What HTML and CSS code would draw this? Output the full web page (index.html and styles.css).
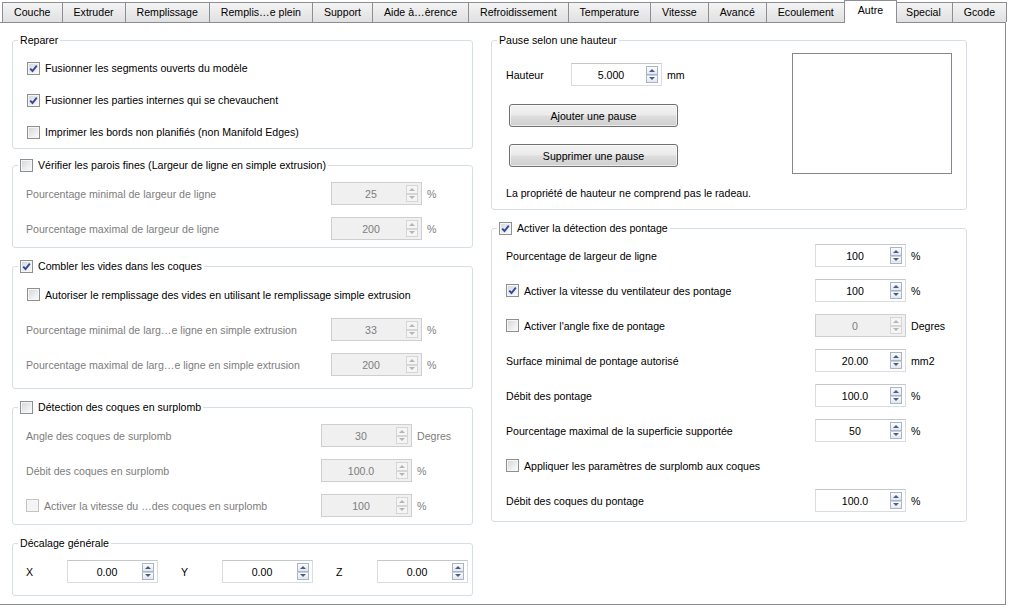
FILE: index.html
```html
<!DOCTYPE html>
<html lang="fr">
<head>
    <meta charset="UTF-8">
    <title>Autre - Réglages</title>
    <link rel="stylesheet" href="styles.css">
</head>
<body>
    <div class="tabs">
        <div class="tab">Couche</div>
        <div class="tab">Extruder</div>
        <div class="tab">Remplissage</div>
        <div class="tab">Remplis…e plein</div>
        <div class="tab">Support</div>
        <div class="tab">Aide à…èrence</div>
        <div class="tab">Refroidissement</div>
        <div class="tab">Temperature</div>
        <div class="tab">Vitesse</div>
        <div class="tab">Avancé</div>
        <div class="tab">Ecoulement</div>
        <div class="tab active">Autre</div>
        <div class="tab">Special</div>
        <div class="tab">Gcode</div>
    </div>

    <div class="pane">
        <!-- colonne gauche -->
        <div class="col col-left">
            <fieldset class="group group-repair">
                <legend>Reparer</legend>
                <div class="row row-check">
                    <span class="check checked"><svg viewBox="0 0 9 9"><path d="M1.2 4.6 L3.5 7 L7.8 1.6"/></svg></span>
                    <span>Fusionner les segments ouverts du modèle</span>
                </div>
                <div class="row row-check">
                    <span class="check checked"><svg viewBox="0 0 9 9"><path d="M1.2 4.6 L3.5 7 L7.8 1.6"/></svg></span>
                    <span>Fusionner les parties internes qui se chevauchent</span>
                </div>
                <div class="row row-check">
                    <span class="check"></span>
                    <span>Imprimer les bords non planifiés (non Manifold Edges)</span>
                </div>
            </fieldset>

            <fieldset class="group">
                <legend><span class="check"></span>Vérifier les parois fines (Largeur de ligne en simple extrusion)</legend>
                <div class="row">
                    <span class="label disabled">Pourcentage minimal de largeur de ligne</span>
                    <div class="spin disabled"><span class="spin-value">25</span><span class="spin-btns"><span class="spin-up"></span><span class="spin-down"></span></span></div>
                    <span class="unit disabled">%</span>
                </div>
                <div class="row">
                    <span class="label disabled">Pourcentage maximal de largeur de ligne</span>
                    <div class="spin disabled"><span class="spin-value">200</span><span class="spin-btns"><span class="spin-up"></span><span class="spin-down"></span></span></div>
                    <span class="unit disabled">%</span>
                </div>
            </fieldset>

            <fieldset class="group group-gaps">
                <legend><span class="check checked"><svg viewBox="0 0 9 9"><path d="M1.2 4.6 L3.5 7 L7.8 1.6"/></svg></span>Combler les vides dans les coques</legend>
                <div class="row row-check">
                    <span class="check"></span>
                    <span>Autoriser le remplissage des vides en utilisant le remplissage simple extrusion</span>
                </div>
                <div class="row">
                    <span class="label disabled">Pourcentage minimal de larg…e ligne en simple extrusion</span>
                    <div class="spin disabled"><span class="spin-value">33</span><span class="spin-btns"><span class="spin-up"></span><span class="spin-down"></span></span></div>
                    <span class="unit disabled">%</span>
                </div>
                <div class="row">
                    <span class="label disabled">Pourcentage maximal de larg…e ligne en simple extrusion</span>
                    <div class="spin disabled"><span class="spin-value">200</span><span class="spin-btns"><span class="spin-up"></span><span class="spin-down"></span></span></div>
                    <span class="unit disabled">%</span>
                </div>
            </fieldset>

            <fieldset class="group group-wide-unit">
                <legend><span class="check"></span>Détection des coques en surplomb</legend>
                <div class="row">
                    <span class="label disabled">Angle des coques de surplomb</span>
                    <div class="spin disabled"><span class="spin-value">30</span><span class="spin-btns"><span class="spin-up"></span><span class="spin-down"></span></span></div>
                    <span class="unit disabled">Degres</span>
                </div>
                <div class="row">
                    <span class="label disabled">Débit des coques en surplomb</span>
                    <div class="spin disabled"><span class="spin-value">100.0</span><span class="spin-btns"><span class="spin-up"></span><span class="spin-down"></span></span></div>
                    <span class="unit disabled">%</span>
                </div>
                <div class="row">
                    <span class="label label-check disabled"><span class="check disabled"></span>Activer la vitesse du …des coques en surplomb</span>
                    <div class="spin disabled"><span class="spin-value">100</span><span class="spin-btns"><span class="spin-up"></span><span class="spin-down"></span></span></div>
                    <span class="unit disabled">%</span>
                </div>
            </fieldset>

            <fieldset class="group group-offset">
                <legend>Décalage générale</legend>
                <div class="row offset-row">
                    <div class="offset-item">
                        <span class="axis">X</span>
                        <div class="spin"><span class="spin-value">0.00</span><span class="spin-btns"><span class="spin-up"></span><span class="spin-down"></span></span></div>
                    </div>
                    <div class="offset-item">
                        <span class="axis">Y</span>
                        <div class="spin"><span class="spin-value">0.00</span><span class="spin-btns"><span class="spin-up"></span><span class="spin-down"></span></span></div>
                    </div>
                    <div class="offset-item">
                        <span class="axis">Z</span>
                        <div class="spin"><span class="spin-value">0.00</span><span class="spin-btns"><span class="spin-up"></span><span class="spin-down"></span></span></div>
                    </div>
                </div>
            </fieldset>
        </div>

        <!-- colonne droite -->
        <div class="col col-right">
            <fieldset class="group group-pause">
                <legend>Pause selon une hauteur</legend>
                <div class="pause-body">
                    <div class="pause-left">
                        <div class="row row-height">
                            <span class="height-label">Hauteur</span>
                            <div class="spin"><span class="spin-value">5.000</span><span class="spin-btns"><span class="spin-up"></span><span class="spin-down"></span></span></div>
                            <span class="unit-mm">mm</span>
                        </div>
                        <button class="btn btn-add">Ajouter une pause</button>
                        <button class="btn btn-remove">Supprimer une pause</button>
                        <p class="note">La propriété de hauteur ne comprend pas le radeau.</p>
                    </div>
                    <div class="pause-list"></div>
                </div>
            </fieldset>

            <fieldset class="group group-bridge group-wide-unit">
                <legend><span class="check checked"><svg viewBox="0 0 9 9"><path d="M1.2 4.6 L3.5 7 L7.8 1.6"/></svg></span>Activer la détection des pontage</legend>
                <div class="row">
                    <span class="label">Pourcentage de largeur de ligne</span>
                    <div class="spin"><span class="spin-value">100</span><span class="spin-btns"><span class="spin-up"></span><span class="spin-down"></span></span></div>
                    <span class="unit">%</span>
                </div>
                <div class="row">
                    <span class="label label-check"><span class="check checked"><svg viewBox="0 0 9 9"><path d="M1.2 4.6 L3.5 7 L7.8 1.6"/></svg></span>Activer la vitesse du ventilateur des pontage</span>
                    <div class="spin"><span class="spin-value">100</span><span class="spin-btns"><span class="spin-up"></span><span class="spin-down"></span></span></div>
                    <span class="unit">%</span>
                </div>
                <div class="row">
                    <span class="label label-check"><span class="check"></span>Activer l'angle fixe de pontage</span>
                    <div class="spin disabled"><span class="spin-value">0</span><span class="spin-btns"><span class="spin-up"></span><span class="spin-down"></span></span></div>
                    <span class="unit">Degres</span>
                </div>
                <div class="row">
                    <span class="label">Surface minimal de pontage autorisé</span>
                    <div class="spin"><span class="spin-value">20.00</span><span class="spin-btns"><span class="spin-up"></span><span class="spin-down"></span></span></div>
                    <span class="unit">mm2</span>
                </div>
                <div class="row">
                    <span class="label">Débit des pontage</span>
                    <div class="spin"><span class="spin-value">100.0</span><span class="spin-btns"><span class="spin-up"></span><span class="spin-down"></span></span></div>
                    <span class="unit">%</span>
                </div>
                <div class="row">
                    <span class="label">Pourcentage maximal de la superficie supportée</span>
                    <div class="spin"><span class="spin-value">50</span><span class="spin-btns"><span class="spin-up"></span><span class="spin-down"></span></span></div>
                    <span class="unit">%</span>
                </div>
                <div class="row">
                    <span class="label label-check"><span class="check"></span>Appliquer les paramètres de surplomb aux coques</span>
                </div>
                <div class="row">
                    <span class="label">Débit des coques du pontage</span>
                    <div class="spin"><span class="spin-value">100.0</span><span class="spin-btns"><span class="spin-up"></span><span class="spin-down"></span></span></div>
                    <span class="unit">%</span>
                </div>
            </fieldset>
        </div>
    </div>
</body>
</html>
```

FILE: styles.css
```css
* {
    margin: 0;
    padding: 0;
    box-sizing: border-box;
}

body {
    font-family: 'Liberation Sans', Arial, sans-serif;
    font-size: 10.6px;
    color: #000;
    background: #fff;
    overflow: hidden;
}

/* onglets */
.tabs {
    display: flex;
    align-items: flex-end;
    height: 22px;
    padding-left: 2px;
}

.tab {
    height: 20px;
    padding: 0 11px;
    line-height: 19px;
    border: 1px solid #8c8e94;
    border-bottom: none;
    border-left: none;
    background: linear-gradient(#f4f4f4, #e8e8e8 60%, #e0e0e0);
    white-space: nowrap;
}

.tab:first-child {
    border-left: 1px solid #8c8e94;
}

.tab.active {
    position: relative;
    z-index: 1;
    height: 23px;
    margin: 0 -2px -1px -2px;
    padding: 0 13px;
    line-height: 19px;
    border-left: 1px solid #8c8e94;
    background: #fff;
}

/* panneau */
.pane {
    display: flex;
    gap: 18px;
    width: 1006px;
    height: 583px;
    padding: 10px 0 0 12px;
    border: 1px solid #898c95;
    border-left: none;
}

.col-left {
    width: 461px;
}

.col-right {
    width: 476px;
}

.group {
    border: 1px solid #d5dfe5;
    border-radius: 3px;
    padding: 4px 0 1px;
    margin-bottom: 11px;
    min-width: 0;
}

.group legend {
    display: flex;
    align-items: center;
    gap: 5px;
    margin-left: 5px;
    padding: 0 2px;
    line-height: 14px;
    height: 14px;
}

.group-repair {
    padding: 5px 0 0;
    margin-bottom: 9px;
}

.group-gaps {
    padding-bottom: 6px;
}

.group-offset {
    padding-bottom: 6px;
}

.row {
    display: flex;
    align-items: center;
    height: 35px;
    padding-left: 13px;
}

.group-repair .row {
    height: 32px;
    padding-left: 14px;
}

.row-check {
    gap: 5px;
    padding-left: 14px;
}

.label {
    flex: 1;
    white-space: nowrap;
}

.label-check {
    display: flex;
    align-items: center;
    gap: 5px;
}

.disabled {
    color: #7d7d7d;
}

.unit {
    width: 45px;
    margin-left: 5px;
}

.group-wide-unit .unit {
    width: 55px;
}

/* case a cocher */
.check {
    display: inline-flex;
    align-items: center;
    justify-content: center;
    flex: none;
    width: 13px;
    height: 13px;
    border: 1px solid #8e8f8f;
    background: linear-gradient(135deg, #d2d4d8 0%, #eceef0 60%, #fbfbfb 100%);
    box-shadow: inset 0 0 0 1px #f6f6f6;
}

.check svg {
    width: 9px;
    height: 9px;
}

.check svg path {
    fill: none;
    stroke: #33489a;
    stroke-width: 1.9;
}

.check.disabled {
    border-color: #c3c3c3;
    background: #f4f4f4;
}

/* spinbox */
.spin {
    display: flex;
    align-items: stretch;
    flex: none;
    width: 91px;
    height: 23px;
    border: 1px solid #d9dce2;
    border-top-color: #c4c8ce;
    background: #fff;
}

.spin-value {
    flex: 1;
    align-self: center;
    text-align: center;
    padding-left: 4px;
}

.spin-btns {
    display: flex;
    flex-direction: column;
    width: 12px;
    margin: 2px 3px 2px 0;
}

.spin-up,
.spin-down {
    flex: 1;
    display: flex;
    align-items: center;
    justify-content: center;
    border: 1px solid #aab4c2;
    background: linear-gradient(#fcfdfe, #e2e7ee);
}

.spin-down {
    border-top-color: #c9d0d9;
}

.spin-up::after,
.spin-down::after {
    content: "";
    border-left: 3px solid transparent;
    border-right: 3px solid transparent;
}

.spin-up::after {
    border-bottom: 3px solid #4a5d86;
}

.spin-down::after {
    border-top: 3px solid #4a5d86;
}

.spin.disabled {
    background: #f0f0f0;
    border-color: #cfcfcf;
}

.spin.disabled .spin-up,
.spin.disabled .spin-down {
    border-color: #d6d6d6;
    background: #f5f5f5;
}

.spin.disabled .spin-up::after {
    border-bottom-color: #b5b5b5;
}

.spin.disabled .spin-down::after {
    border-top-color: #b5b5b5;
}

/* decalage */
.offset-row {
    gap: 23px;
}

.offset-item {
    display: flex;
    align-items: center;
}

.axis {
    width: 41px;
}

/* pause */
.group-pause {
    padding: 0 0 9px;
    margin-bottom: 11px;
}

.pause-body {
    display: flex;
}

.pause-left {
    flex: 1;
    padding: 10px 0 0 14px;
}

.pause-left .row {
    padding-left: 0;
}

.height-label {
    width: 65px;
}

.unit-mm {
    margin-left: 5px;
}

.btn {
    display: block;
    width: 169px;
    height: 23px;
    margin-left: 3px;
    border: 1px solid #707070;
    border-radius: 3px;
    background: linear-gradient(#f2f2f2 0%, #ebebeb 48%, #dddddd 52%, #cfcfcf 100%);
    box-shadow: inset 0 0 0 1px rgba(255, 255, 255, 0.6);
    font: inherit;
    color: #000;
}

.btn-add {
    margin-top: 12px;
}

.btn-remove {
    margin-top: 17px;
}

.note {
    margin-top: 19px;
    line-height: 14px;
}

.pause-list {
    width: 160px;
    height: 121px;
    margin: 6px 14px 0 0;
    border: 1px solid #828790;
    background: #fff;
}

.group-bridge {
    padding: 3px 0 3px;
}

.group-bridge .row {
    padding-left: 14px;
}
```
